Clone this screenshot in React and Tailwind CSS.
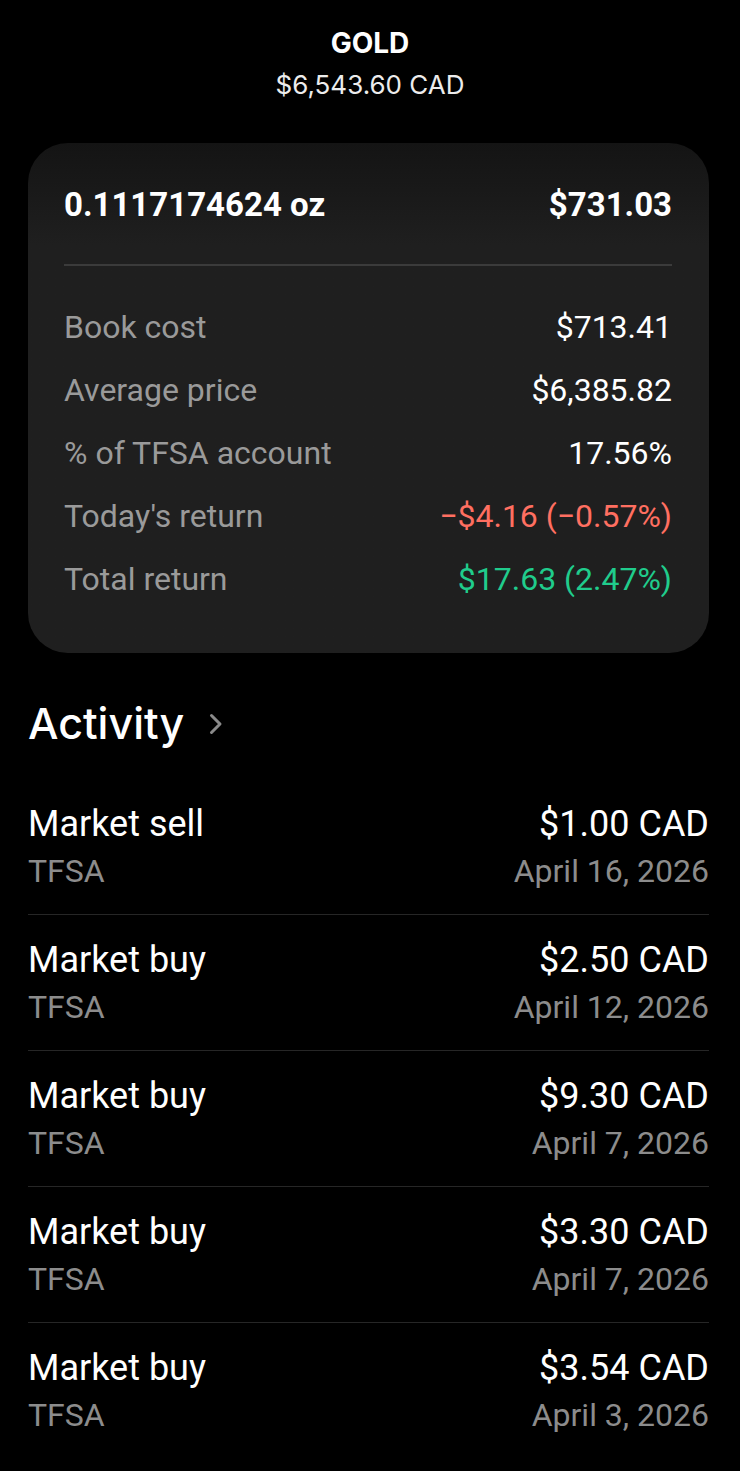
const stats = [
  { label: "Book cost", value: "$713.41", tone: "text-white" },
  { label: "Average price", value: "$6,385.82", tone: "text-white" },
  { label: "% of TFSA account", value: "17.56%", tone: "text-white" },
  { label: "Today's return", value: "\u2212$4.16 (\u22120.57%)", tone: "text-[#ff6f61]" },
  { label: "Total return", value: "$17.63 (2.47%)", tone: "text-[#20cc8c]" },
];

const activity = [
  { type: "Market sell", amount: "$1.00 CAD", date: "April 16, 2026" },
  { type: "Market buy", amount: "$2.50 CAD", date: "April 12, 2026" },
  { type: "Market buy", amount: "$9.30 CAD", date: "April 7, 2026" },
  { type: "Market buy", amount: "$3.30 CAD", date: "April 7, 2026" },
  { type: "Market buy", amount: "$3.54 CAD", date: "April 3, 2026" },
];

export default function App() {
  return (
    <div
      className="min-h-[1471px] w-[740px] bg-black text-white"
      style={{ fontFamily: "Roboto, 'Liberation Sans', sans-serif" }}
    >
      {/* header */}
      <div className="flex flex-col items-center pt-[24px]">
        <div className="text-[28px] font-bold leading-[38px]" style={{ fontFamily: "Inter, Roboto, sans-serif" }}>
          GOLD
        </div>
        <div className="mt-[2px] text-[26px] leading-[42px] text-[#ececec]" style={{ fontFamily: "Inter, Roboto, sans-serif" }}>
          $6,543.60 CAD
        </div>
      </div>

      {/* position card */}
      <div className="ml-[28px] mr-[31px] mt-[37px] rounded-[40px] bg-gradient-to-b from-[#141414] to-[#1f1f1f] to-[20%] pl-[36px] pr-[37px] pt-[42px] pb-[54px]">
        <div className="flex items-center justify-between text-[33px] font-bold leading-[40px]">
          <span>0.1117174624 oz</span>
          <span>$731.03</span>
        </div>
        <div className="mt-[39px] h-[2px] bg-[#3b3b3b]" />
        <div className="mt-[41px] flex flex-col gap-[23px]">
          {stats.map((s) => (
            <div key={s.label} className="flex items-center justify-between text-[32px] leading-[40px]">
              <span className="text-[#9a9a9a]">{s.label}</span>
              <span className={s.tone}>{s.value}</span>
            </div>
          ))}
        </div>
      </div>

      {/* activity */}
      <div className="pl-[28px] pr-[31px]">
        <div className="mt-[47px] flex items-center gap-[25px]">
          <span className="text-[43px] font-medium leading-[46px]" style={{ fontFamily: "Inter, Roboto, sans-serif" }}>
            Activity
          </span>
          <svg width="14" height="22" viewBox="0 0 14 22" fill="none" className="mt-[1px]">
            <path d="M2.5 2.5l8.5 8.5-8.5 8.5" stroke="#8a8a8a" strokeWidth="3" strokeLinecap="round" strokeLinejoin="round" />
          </svg>
        </div>
        <div className="mt-[33px]">
          {activity.map((a, i) => (
            <div
              key={i}
              className={`flex justify-between pt-[25px] pb-[23px] ${i < activity.length - 1 ? "border-b border-[#262626]" : ""}`}
            >
              <div className="flex flex-col">
                <span className="text-[36px] leading-[40px]">{a.type}</span>
                <span className="mt-[7px] text-[32px] leading-[40px] text-[#8c8c8c]">TFSA</span>
              </div>
              <div className="flex flex-col items-end">
                <span className="text-[36px] leading-[40px]">{a.amount}</span>
                <span className="mt-[7px] text-[32px] leading-[40px] text-[#8c8c8c]">{a.date}</span>
              </div>
            </div>
          ))}
        </div>
      </div>
    </div>
  );
}
